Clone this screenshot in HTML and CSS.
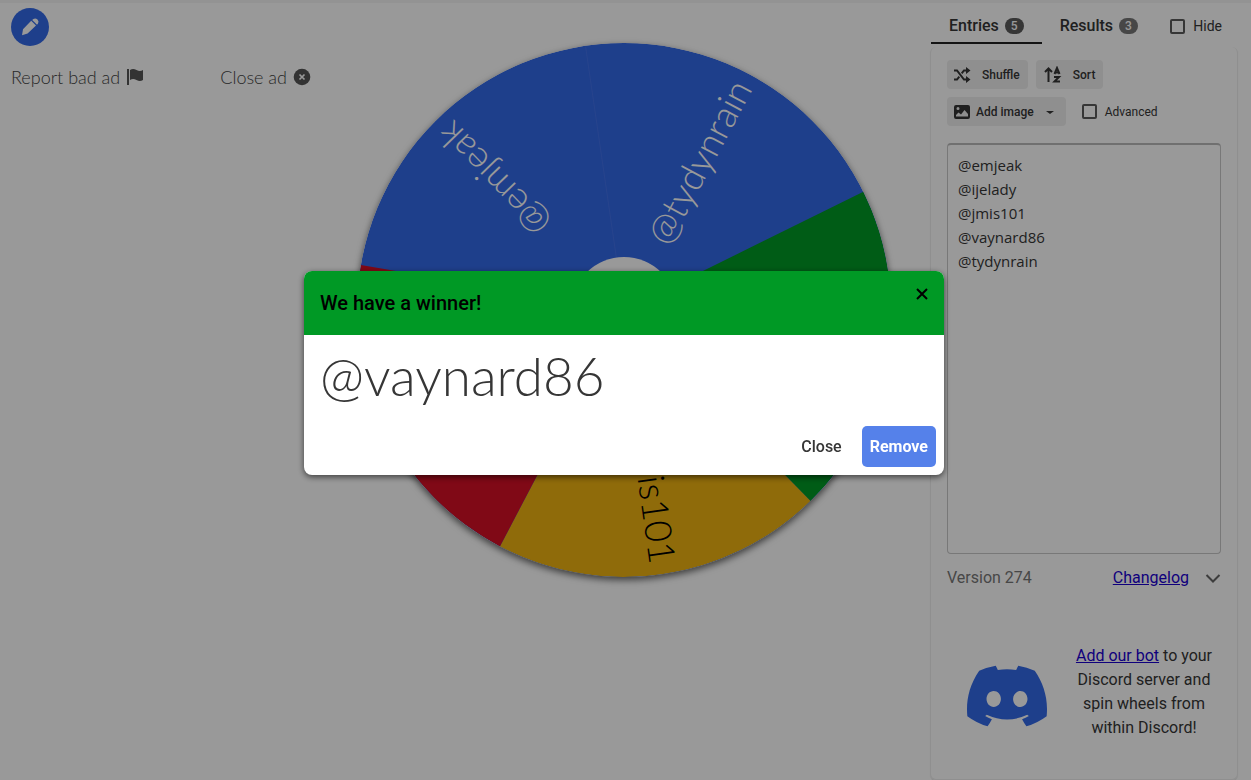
FILE: index.html
```
<!DOCTYPE html>
<html lang="en">

<head>
    <meta charset="UTF-8">
    <meta name="viewport" content="width=device-width, initial-scale=1.0">
    <title>Wheel of Names</title>
    <link rel="stylesheet" href="styles.css">
</head>

<body>
    <div class="page">
        <aside class="ad-column">
            <button class="edit-button" type="button" aria-label="Edit">
                <svg viewBox="0 0 24 24" width="24" height="24"><path fill="#fff" d="M13.200 5.800L18 10.600L9.600 18.600L4 20.200L5 14.200ZM14.200 4.900L15.400 3.900Q17.500 2.700 19.500 4.600Q21.300 6.500 20 8.500L19 9.700Z"/></svg>
            </button>
            <div class="ad-links">
                <button type="button">Report bad ad
                    <svg viewBox="0 0 18 18" width="18" height="18"><path fill="#555" d="M1 1h2v16H1zM4 2Q7 0 10.500 2T17 2V12Q14 14 10.500 12T4 12z"/></svg>
                </button>
                <button type="button">Close ad
                    <svg viewBox="0 0 18 18" width="18" height="18"><circle cx="9" cy="9" r="8.300" fill="#555"/><path d="M6.500 6.500l5 5m0-5l-5 5" stroke="#fff" stroke-width="1.700"/></svg>
                </button>
            </div>
        </aside>

        <main class="wheel-column">
            <svg class="wheel" viewBox="-267 -267 534 534">
                <circle r="267" fill="#3369e8"/>
                <!-- slices are 72 degrees each, the group is turned to the stop position -->
                <g transform="rotate(-26.300)">
                    <path fill="#009925" d="M0 0L267 0A267 267 0 0 1 82.510 253.930Z"/>
                    <path fill="#eeb211" d="M0 0L267 0A267 267 0 0 1 82.510 253.930Z" transform="rotate(72)"/>
                    <path fill="#d50f25" d="M0 0L267 0A267 267 0 0 1 82.510 253.930Z" transform="rotate(144)"/>
                    <path stroke="#4272e9" stroke-width="1" d="M50 0H266" transform="rotate(288)"/>
                </g>
                <g class="wheel-names">
                    <text x="256" y="10" fill="#fff" transform="rotate(-62)">@tydynrain</text>
                    <text x="256" y="10" fill="#fff" transform="rotate(10)">@vaynard86</text>
                    <text x="256" y="10" fill="#000" transform="rotate(82)">@jmis101</text>
                    <text x="256" y="10" fill="#fff" transform="rotate(154)">@ijelady</text>
                    <text x="256" y="10" fill="#fff" transform="rotate(226)">@emjeak</text>
                </g>
                <circle r="53" fill="#fff"/>
            </svg>
        </main>

        <aside class="sidebar">
            <div class="tabs">
                <button class="tab active" type="button">Entries <span class="count">5</span></button>
                <button class="tab" type="button">Results <span class="count">3</span></button>
                <label class="check hide-check" for="hide"><input type="checkbox" id="hide"> Hide</label>
            </div>

            <div class="panel">
                <div class="tools">
                    <button class="tool" type="button">
                        <svg viewBox="0 0 18 18" width="18" height="18"><path fill="none" stroke="#363636" stroke-width="2" d="M1 4.500H4L11 13.500H14M1 13.500H4L6.300 10.600M8.700 7.400L11 4.500H14"/><path fill="#363636" d="M13 1L17.500 4.500L13 8zM13 10L17.500 13.500L13 17z"/></svg>
                        <span>Shuffle</span>
                    </button>
                    <button class="tool sort" type="button">
                        <svg viewBox="0 0 18 18" width="18" height="18"><path fill="none" stroke="#363636" stroke-width="2" d="M4.500 16V3M1 6L4.500 2.500L8 6"/><path fill="none" stroke="#363636" stroke-width="2" d="M10.500 8L13 2L15.500 8M11.500 6.500H14.500M10 11H15L10.500 15.500H16"/></svg>
                        <span>Sort</span>
                    </button>
                    <button class="tool add-image" type="button">
                        <svg viewBox="0 0 18 18" width="18" height="18"><path fill="#363636" fill-rule="evenodd" d="M3 2H15Q17 2 17 4V14Q17 16 15 16H3Q1 16 1 14V4Q1 2 3 2ZM3 13.500H15V11L11.500 7L8 11.500L5.500 9.500L3 12ZM5 4A1.500 1.500 0 1 0 5 7A1.500 1.500 0 1 0 5 4Z"/></svg>
                        <span>Add image</span>
                        <svg class="caret" viewBox="0 0 8 4" width="8" height="4"><path fill="#363636" d="M0 1H8L4 4z"/></svg>
                    </button>
                    <label class="check" for="advanced"><input type="checkbox" id="advanced"> Advanced</label>
                </div>

                <textarea class="entries" aria-label="Entries" spellcheck="false">@emjeak
@ijelady
@jmis101
@vaynard86
@tydynrain</textarea>

                <div class="version">
                    <span>Version 274</span>
                    <a href="#">Changelog</a>
                    <svg viewBox="0 0 16 16" width="16" height="16"><path fill="none" stroke="#666" stroke-width="2" d="M1.500 5L8 11.500L14.500 5"/></svg>
                </div>

                <div class="discord">
                    <svg viewBox="0 0 127.140 96.360" width="80" height="62"><path fill="#3369e8" d="M107.700,8.070A105.150,105.150,0,0,0,81.470,0a72.060,72.060,0,0,0-3.360,6.830A97.680,97.680,0,0,0,49,6.830,72.370,72.370,0,0,0,45.640,0,105.890,105.890,0,0,0,19.390,8.090C2.790,32.650-1.710,56.600.54,80.210h0A105.730,105.730,0,0,0,32.710,96.360,77.700,77.700,0,0,0,39.600,85.250a68.420,68.420,0,0,1-10.850-5.180c.91-.66,1.800-1.340,2.660-2a75.570,75.570,0,0,0,64.320,0c.87.71,1.760,1.390,2.660,2a68.680,68.680,0,0,1-10.870,5.190,77,77,0,0,0,6.890,11.100A105.250,105.250,0,0,0,126.600,80.220h0C129.240,52.840,122.090,29.110,107.700,8.070ZM42.450,65.690C36.180,65.690,31,60,31,53s5-12.740,11.430-12.740S54,46,53.890,53,48.840,65.690,42.450,65.690Zm42.240,0C78.410,65.690,73.250,60,73.250,53s5-12.740,11.440-12.740S96.230,46,96.120,53,91.080,65.690,84.690,65.690Z"/></svg>
                    <p><a href="#">Add our bot</a> to your Discord server and spin wheels from within Discord!</p>
                </div>
            </div>
        </aside>
    </div>

    <div class="overlay">
        <div class="modal" role="dialog" aria-modal="true" aria-labelledby="modalTitle">
            <header class="modal-head">
                <h1 id="modalTitle">We have a winner!</h1>
                <button type="button" aria-label="Dismiss">
                    <svg viewBox="0 0 12 12" width="12" height="12"><path stroke="#000" stroke-width="2" d="M1 1L11 11M11 1L1 11"/></svg>
                </button>
            </header>
            <p class="winner">@vaynard86</p>
            <footer class="modal-foot">
                <button class="close" type="button">Close</button>
                <button class="remove" type="button">Remove</button>
            </footer>
        </div>
    </div>
</body>

</html>
```
FILE: styles.css
```
* {
    box-sizing: border-box;
}

body {
    margin: 0;
    height: 100vh;
    overflow: hidden;
    background: #fff;
    color: #363636;
    font-family: Roboto, sans-serif;
    font-size: 16px;
    line-height: 24px;
}

button {
    font: inherit;
    color: inherit;
    border: none;
    background: none;
    padding: 0;
    cursor: pointer;
}

a {
    color: #1a00d0;
}

p {
    margin: 0;
}

svg {
    flex: none;
}

.page {
    display: grid;
    grid-template-columns: 320px 1fr 321px;
    height: 100vh;
    border-top: 3px solid #f6f6f6;
}

.ad-column {
    padding: 5px 9px 0 11px;
}

.edit-button {
    display: flex;
    align-items: center;
    justify-content: center;
    width: 38px;
    height: 38px;
    border-radius: 50%;
    background: #3369e8;
}

.ad-links {
    display: flex;
    justify-content: space-between;
    margin-top: 19px;
    font-family: Lato, sans-serif;
    font-weight: 300;
    font-size: 18px;
}

.ad-links button {
    display: flex;
    align-items: center;
    gap: 6px;
    color: #444;
}

.wheel-column {
    display: flex;
    justify-content: center;
    align-items: flex-start;
    padding: 40px 2px 0 0;
}

.wheel {
    width: 100%;
    max-width: 534px;
    border-radius: 50%;
    box-shadow: 0 3px 7px rgba(0, 0, 0, 0.6);
}

.wheel-names {
    font-family: Lato, sans-serif;
    font-weight: 300;
    font-size: 37px;
    text-anchor: end;
}

.sidebar {
    display: flex;
    flex-direction: column;
    padding-right: 13px;
}

.tabs {
    display: flex;
    align-items: center;
    height: 41px;
    padding-left: 1px;
}

.tab {
    display: flex;
    align-items: center;
    gap: 6px;
    height: 41px;
    padding: 6px 18px 0;
    border-bottom: 2px solid transparent;
    font-weight: 500;
}

.tab.active {
    border-color: #222;
}

.count {
    padding: 0 6px;
    border-radius: 8px;
    background: #777;
    color: #fff;
    font-size: 12px;
    line-height: 16px;
}

.active .count {
    background: #5a5a5a;
}

.check {
    display: flex;
    align-items: center;
    gap: 8px;
    font-size: 12px;
}

.check input {
    appearance: none;
    width: 15px;
    height: 15px;
    margin: 0;
    border: 2px solid #5a5a5a;
    border-radius: 2px;
}

.hide-check {
    margin: 5px 0 0 auto;
    padding-right: 16px;
    font-size: 14px;
}

.panel {
    flex: 1;
    margin-top: 3px;
    padding: 13px 16px;
    border: 1px solid #eee;
    border-width: 0 1px 1px;
    border-radius: 6px;
    box-shadow: 0 1px 1px rgba(0, 0, 0, 0.1);
}

.tools {
    display: flex;
    flex-wrap: wrap;
    gap: 8px;
}

.tool {
    display: flex;
    align-items: center;
    gap: 11px;
    height: 29px;
    padding: 0 8px 0 6px;
    border-radius: 4px;
    background: #efefef;
    font-size: 12px;
    font-weight: 500;
}

.sort {
    padding: 0 8px;
}

.add-image {
    gap: 5px;
    padding-right: 12px;
    margin-right: 8px;
}

.caret {
    margin-left: 7px;
}

.entries {
    display: block;
    width: 100%;
    height: 411px;
    margin-top: 17px;
    padding: 8px 10px;
    border: 1px solid #c8c8c8;
    border-top: 2px solid #bbb;
    border-radius: 4px;
    background: #fff;
    color: #363636;
    font-family: "Open Sans", sans-serif;
    font-size: 15px;
    line-height: 24px;
    resize: none;
    outline: none;
}

.version {
    display: flex;
    align-items: center;
    margin-top: 12px;
    color: #777;
}

.version a {
    margin: 0 16px 0 auto;
}

.discord {
    display: flex;
    align-items: center;
    gap: 20px;
    margin-top: 54px;
    padding-left: 20px;
}

.discord svg {
    margin-top: 8px;
}

.discord p {
    flex: 1;
    text-align: center;
}

.overlay {
    position: fixed;
    inset: 0;
    display: flex;
    align-items: center;
    justify-content: center;
    padding: 0 3px 34px 0;
    background: rgba(0, 0, 0, 0.4);
}

.modal {
    width: 640px;
    max-width: 95%;
    border-radius: 8px;
    overflow: hidden;
    background: #fff;
    box-shadow: 0 2px 6px rgba(0, 0, 0, 0.6);
}

.modal-head {
    display: flex;
    justify-content: space-between;
    padding: 16px;
    background: #009925;
    color: #000;
}

.modal-head h1 {
    margin: 0;
    font-size: 20px;
    font-weight: 500;
    line-height: 32px;
}

.modal-head button {
    height: 16px;
    line-height: 16px;
}

.winner {
    padding: 9px 16px 10px;
    font-family: Lato, sans-serif;
    font-weight: 300;
    font-size: 53px;
    line-height: 64px;
}

.modal-foot {
    display: flex;
    justify-content: flex-end;
    gap: 12px;
    padding: 8px;
}

.modal-foot button {
    height: 41px;
    padding: 0 8px;
    border-radius: 5px;
    font-weight: 500;
}

.modal-foot .remove {
    background: #5581ea;
    color: #fff;
    font-weight: 700;
}
```
